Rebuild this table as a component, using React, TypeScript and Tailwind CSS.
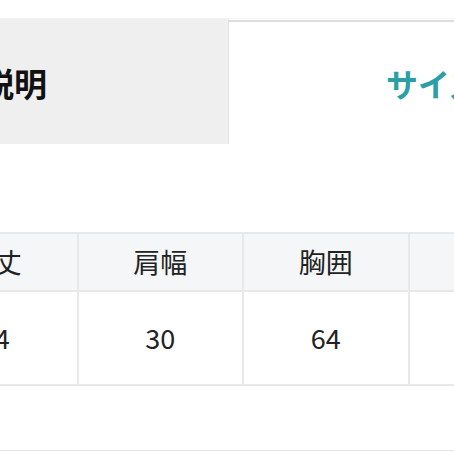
import React from "react";

const font = { fontFamily: '"Noto Sans CJK JP", "Noto Sans", sans-serif' };

const headers = ["着丈", "肩幅", "胸囲", "袖丈"];
const values = ["54", "30", "64", "20"];

export default function App() {
  return (
    <div
      className="w-[454px] h-[454px] overflow-hidden bg-white flex flex-col"
      style={font}
    >
      <div className="mt-[18px] flex h-[126px] border-t border-[#f3f3f3]">
        <div className="w-[229px] shrink-0 bg-[#efefef] border-r border-[#e2e2e2] flex items-center">
          <span className="ml-[-19px] text-[33px] font-bold text-[#111] whitespace-nowrap leading-none pt-[4px]">
            説明
          </span>
        </div>
        <div className="flex-1 bg-white border-t-2 border-[#dcdcdc] mt-[1px] flex items-center">
          <span className="pl-[157px] text-[32px] font-bold text-[#2a9fa5] whitespace-nowrap leading-none">
            サイズ表
          </span>
        </div>
      </div>

      <div className="mt-[88px] ml-[-87px] w-[662px] border-t-2 border-b-2 border-[#e6e8ea]">
        <div className="grid grid-cols-4 h-[58px] bg-[#f4f6f7] border-b-2 border-[#e6e8ea]">
          {headers.map((h, i) => (
            <div
              key={h}
              className={`flex items-center justify-center text-[27px] text-[#222] ${
                i < 3 ? "border-r-2 border-[#e6e8ea]" : ""
              }`}
            >
              {h}
            </div>
          ))}
        </div>
        <div className="grid grid-cols-4 h-[92px]">
          {values.map((v, i) => (
            <div
              key={i}
              className={`flex items-center justify-center text-[27px] text-[#222] ${
                i < 3 ? "border-r-2 border-[#e6e8ea]" : ""
              }`}
            >
              {v}
            </div>
          ))}
        </div>
      </div>

      <div className="mt-[64px] h-[1px] bg-[#e3e3e3]" />
    </div>
  );
}
